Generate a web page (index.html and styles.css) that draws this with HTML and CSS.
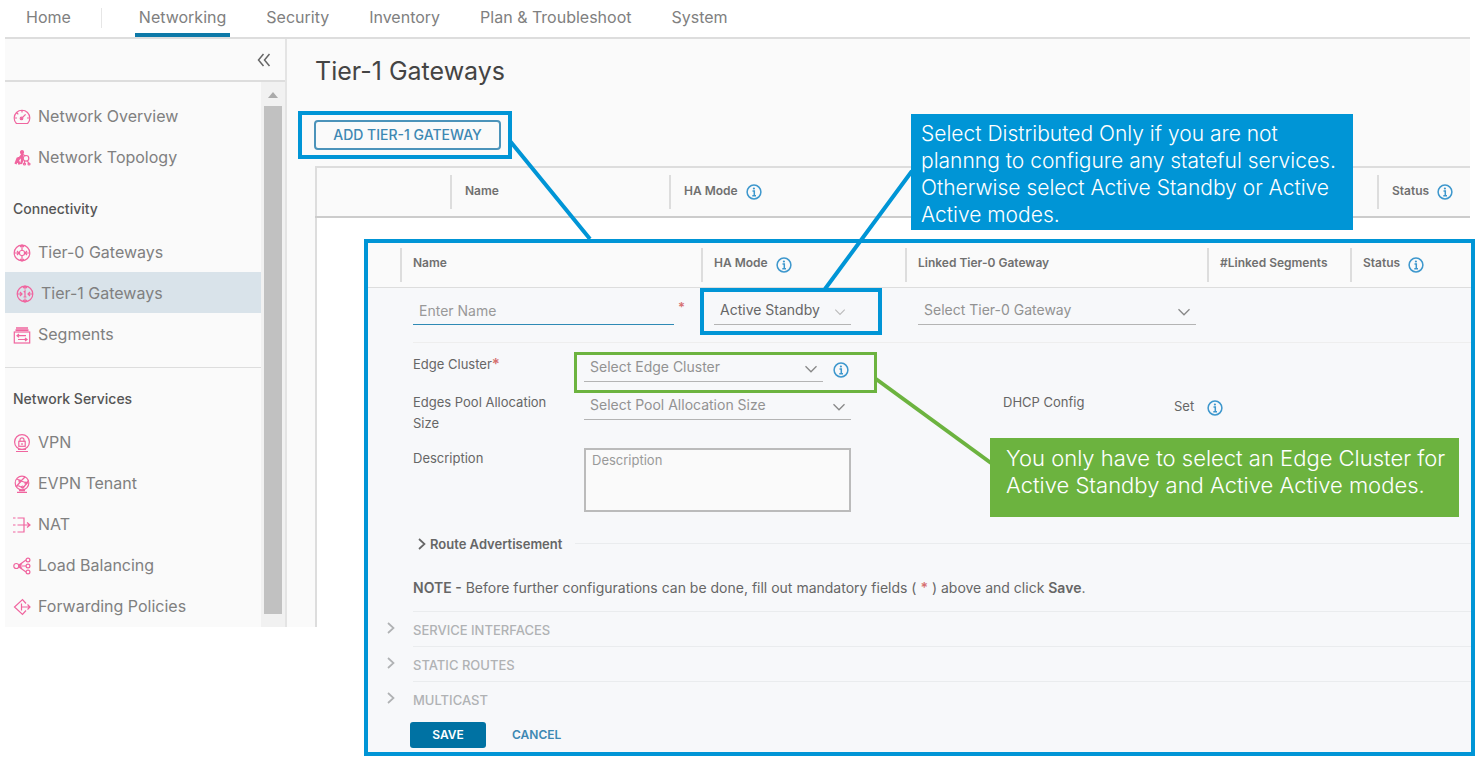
FILE: index.html
```html
<!DOCTYPE html>
<html lang="en">
<head>
<meta charset="utf-8">
<title>Tier-1 Gateways</title>
<link rel="stylesheet" href="styles.css">
</head>
<body>
<svg class="sprite" aria-hidden="true">
  <symbol id="info" viewBox="0 0 16 16"><circle cx="8" cy="8" r="6.9" fill="none" stroke="currentColor" stroke-width="1.5"/><path d="M6.5 7h1.8v4.6M6.3 11.7h3.7" fill="none" stroke="currentColor" stroke-width="1.5"/><circle cx="7.9" cy="4.5" r="1.1" fill="currentColor"/></symbol>
  <symbol id="down" viewBox="0 0 14 14"><path d="M1.5 4.2 7 9.8l5.5-5.6" fill="none" stroke="currentColor" stroke-width="1.3"/></symbol>
  <symbol id="right" viewBox="0 0 10 12"><path d="M2 1l5.5 5L2 11" fill="none" stroke="currentColor" stroke-width="1.7"/></symbol>
</svg>

<nav class="topnav">
  <a href="#" class="home">Home</a>
  <a href="#" class="current">Networking</a>
  <a href="#">Security</a>
  <a href="#">Inventory</a>
  <a href="#">Plan &amp; Troubleshoot</a>
  <a href="#">System</a>
</nav>

<div class="app">
  <aside class="sidebar">
    <div class="side-head">
      <button class="collapse" aria-label="Collapse menu"><svg width="14" height="14" viewBox="0 0 14 14"><path d="M6.5 1 1.5 7l5 6M12.5 1l-5 6 5 6" fill="none" stroke="currentColor" stroke-width="1.5"/></svg></button>
    </div>
    <div class="side-body">
      <nav class="menu">
        <a href="#"><svg viewBox="0 0 18 18"><path d="M3.4 15.5A7.8 7.8 0 1 1 14.6 15.5zM9 2.5v2M2 10h2M14 10h2M4 5l1.3 1.3" /><path d="M8 11l4.6-4.7"/><circle cx="8.5" cy="10.4" r="1.3"/></svg>Network Overview</a>
        <a href="#"><svg viewBox="0 0 18 18"><path stroke-width="2.3" d="M9 3.500v4L4.500 9.500 2.500 15M9 6l-4 5 1.500 4.500M9 7v5l-1 3"/><circle cx="9" cy="3.200" r="1.500" fill="#f0659f"/><path d="M9 5l3.500 2"/><circle cx="13" cy="9.300" r="2.800"/><path d="M11.500 12v3M14.500 12l1.500 3"/><circle cx="11.500" cy="15" r="1"/><circle cx="16" cy="15" r="1"/></svg>Network Topology</a>
        <h2>Connectivity</h2>
        <a href="#"><svg viewBox="0 0 18 18"><circle cx="9" cy="9" r="7.8"/><path d="M9 1v5M9 12v5M1 9h5M12 9h5M4 7l2 2-2 2M14 7l-2 2 2 2M7 3l2-2 2 2M7 15l2 2 2-2"/><rect x="6.5" y="6.5" width="5" height="5" rx="2"/></svg>Tier-0 Gateways</a>
        <a href="#" class="selected"><svg viewBox="0 0 18 18"><circle cx="9" cy="9" r="7.8"/><path d="M9 1v3.5M9 13.5V17M1 9h5M12 9h5M4 7l2 2-2 2M14 7l-2 2 2 2M7 3l2-2 2 2M7 15l2 2 2-2M7.7 7 9 6v6M7.5 12h3"/></svg>Tier-1 Gateways</a>
        <a href="#"><svg viewBox="0 0 18 18"><path d="M3 2h12M2.5 4.2h13" stroke-width="1.7"/><rect x="1.3" y="6" width="15.4" height="11"/><path d="M4 9.7h9M6 8l-2 1.7L6 11.400M5 13.500h9M12 12l2 1.500-2 1.500"/></svg>Segments</a>
        <hr>
        <h2>Network Services</h2>
        <a href="#"><svg viewBox="0 0 18 18"><circle cx="9" cy="8" r="7.4"/><rect x="5.800" y="7.300" width="6.400" height="5"/><path d="M7 7V5.800a2 2 0 0 1 4 0V7M9 9v2M5 15.500h8M3 17.500h12"/></svg>VPN</a>
        <a href="#"><svg viewBox="0 0 18 18"><circle cx="9" cy="8" r="6.800"/><path d="M4 4l4 2 4-4M8 6l-5 6M8 6l6 2-4 5M14 8l1.500-3M10 13l-6-3M6 15.500h6M4 17.500h10" stroke-width="1.300"/><circle cx="7" cy="6" r="1"/><circle cx="13" cy="8" r="1"/><circle cx="9.500" cy="12" r="1"/></svg>EVPN Tenant</a>
        <a href="#"><svg viewBox="0 0 18 18"><path d="M4.500 2h6.500v14H4.500M0 2h2.500M0 9h2.500M0 16h2.500M4.500 9H17M14 6.500 17 9l-3 2.500"/></svg>NAT</a>
        <a href="#"><svg viewBox="0 0 18 18"><circle cx="3.300" cy="9" r="2.500"/><path d="M5.800 9H13M6 8l7-5M6 10l7 5M9 6.500 6 9l3 2.500"/><circle cx="15" cy="3" r="1.900"/><circle cx="15" cy="9" r="1.900"/><circle cx="15" cy="15" r="1.900"/></svg>Load Balancing</a>
        <a href="#"><svg viewBox="0 0 18 18"><path d="M13 5.500 9.500 1.500 1.500 9l8 7.500 3.500-4M8.500 5.500v7M8.500 9H17M14.500 6.500 17 9l-2.500 2.500"/></svg>Forwarding Policies</a>
      </nav>
      <div class="scrollbar"><span class="scroll-up"></span><span class="thumb"></span></div>
    </div>
  </aside>

  <main class="main">
    <h1>Tier-1 Gateways</h1>
    <div class="add-frame"><button class="add">ADD TIER-1 GATEWAY</button></div>
    <table class="listing">
      <colgroup><col class="l-tools"><col class="l-name"><col><col class="l-status"></colgroup>
      <thead><tr>
        <th></th>
        <th><span>Name</span></th>
        <th><span>HA Mode <svg class="info"><use href="#info"/></svg></span></th>
        <th><span>Status <svg class="info"><use href="#info"/></svg></span></th>
      </tr></thead>
    </table>
  </main>
</div>

<section class="editor">
  <table class="edit-table">
    <colgroup><col class="e-tools"><col class="e-name"><col class="e-mode"><col class="e-linked"><col class="e-segments"><col></colgroup>
    <thead><tr>
      <th></th>
      <th><span>Name</span></th>
      <th><span>HA Mode <svg class="info"><use href="#info"/></svg></span></th>
      <th><span>Linked Tier-0 Gateway</span></th>
      <th><span>#Linked Segments</span></th>
      <th><span>Status <svg class="info"><use href="#info"/></svg></span></th>
    </tr></thead>
    <tbody><tr>
      <td></td>
      <td><div class="cell"><input class="field name" type="text" placeholder="Enter Name" aria-label="Name"><b class="req">*</b></div></td>
      <td><div class="cell"><div class="picker mode"><select class="field" aria-label="HA Mode"><option>Active Standby</option><option>Active Active</option><option>Distributed Only</option></select><svg><use href="#down"/></svg></div></div></td>
      <td><div class="cell"><div class="picker linked"><select class="field" aria-label="Linked Tier-0 Gateway"><option>Select Tier-0 Gateway</option></select><svg><use href="#down"/></svg></div></div></td>
      <td></td>
      <td></td>
    </tr></tbody>
  </table>

  <form class="details">
    <div class="form-grid">
      <label for="cluster">Edge Cluster<b class="req">*</b></label>
      <div class="control"><div class="picker cluster"><select class="field" id="cluster"><option>Select Edge Cluster</option></select><svg><use href="#down"/></svg></div><svg class="info"><use href="#info"/></svg></div>
      <span></span><span></span>
      <label for="pool">Edges Pool Allocation Size</label>
      <div class="control"><div class="picker pool"><select class="field" id="pool"><option>Select Pool Allocation Size</option></select><svg><use href="#down"/></svg></div></div>
      <span class="label">DHCP Config</span>
      <div class="control set"><a href="#">Set</a><svg class="info"><use href="#info"/></svg></div>
      <label for="desc">Description</label>
      <textarea id="desc" placeholder="Description"></textarea>
    </div>
    <button type="button" class="route"><svg width="10" height="12"><use href="#right"/></svg>Route Advertisement</button>
    <p class="note"><b>NOTE -</b> Before further configurations can be done, fill out mandatory fields ( <b class="req">*</b> ) above and click <b>Save</b>.</p>
    <button type="button" class="section" disabled><svg width="10" height="12"><use href="#right"/></svg><span>SERVICE INTERFACES</span></button>
    <button type="button" class="section" disabled><svg width="10" height="12"><use href="#right"/></svg><span>STATIC ROUTES</span></button>
    <button type="button" class="section" disabled><svg width="10" height="12"><use href="#right"/></svg><span>MULTICAST</span></button>
    <div class="actions"><button type="button" class="save">SAVE</button><button type="button" class="cancel">CANCEL</button></div>
  </form>
</section>

<svg class="connectors" aria-hidden="true">
  <path class="blue" d="M510 141 590 239M912 171 825 289"/>
  <path class="green" d="M876 379 991 463"/>
</svg>
<div class="frame mode-frame"></div>
<div class="frame cluster-frame"></div>
<p class="callout tip-mode">Select Distributed Only if you are not<br>plannng to configure any stateful services.<br>Otherwise select Active Standby or Active<br>Active modes.</p>
<p class="callout tip-cluster">You only have to select an Edge Cluster for<br>Active Standby and Active Active modes.</p>
</body>
</html>
```

FILE: styles.css
```css
* { box-sizing: border-box; }
body { margin: 0; min-height: 758px; position: relative; background: #fff; color: #666; font: 13px/20px Inter, "Open Sans", sans-serif; }
a { color: inherit; text-decoration: none; }
button, input, select, textarea { font: inherit; color: inherit; margin: 0; border-radius: 0; }
button { background: none; border: 0; padding: 0; }
h1, h2, p { margin: 0; font-weight: 400; }
.sprite { display: none; }
.info { width: 16px; height: 16px; color: #3d97cd; flex: none; }

.topnav { display: flex; gap: 40px; height: 39px; margin: 0 6px 0 5px; padding-left: 21px; border-bottom: 2px solid #ddd; font-size: 16px; color: #808080; }
.topnav a { height: 37px; line-height: 35px; }
.topnav .home { display: flex; gap: 30px; margin-right: -3px; }
.topnav .home::after { content: ""; width: 1px; height: 20px; margin-top: 8px; background: #e6e6e6; }
.topnav .current { padding: 0 4px; border-bottom: 4px solid #0d79a8; margin: 0 -4px; }

.app { display: grid; grid-template-columns: 282px 1fr; height: 588px; margin: 0 6px 0 5px; background: #fafafa; }
.sidebar { display: flex; flex-direction: column; border-right: 2px solid #e4e4e4; min-height: 0; }
.side-head { height: 43px; border-bottom: 2px solid #ddd; display: flex; justify-content: flex-end; align-items: center; padding-right: 14px; }
.collapse { display: flex; color: #666; }
.side-body { flex: 1; min-height: 0; display: flex; }
.menu { flex: 1; padding-top: 13px; font-size: 16px; color: #808080; }
.menu a { display: flex; align-items: center; gap: 7px; height: 41px; padding-left: 8px; }
.menu svg { width: 18px; height: 18px; margin-top: 3px; fill: none; stroke: #f0659f; stroke-width: 1.2; }
.menu .selected { padding-left: 11px; background: #d9e3ea; }
.menu h2 { height: 44px; margin-top: 10px; padding-left: 8px; font-size: 14px; line-height: 44px; font-weight: 500; color: #555; }
.menu hr { margin: 13px 0 0; border: 0; border-top: 1px solid #ddd; }
.menu hr + h2 { margin-top: 9px; }
.scrollbar { width: 24px; background: #f1f1f1; display: flex; flex-direction: column; align-items: center; padding-bottom: 13px; }
.scroll-up { margin: 10px 0 8px; border: 5px solid transparent; border-top: 0; border-bottom: 6px solid #aaa; }
.thumb { width: 18px; flex: 1; background: #c1c1c1; }

.main { display: flex; flex-direction: column; padding-left: 28px; min-width: 0; }
h1 { font-size: 25px; line-height: 34px; padding-top: 15px; color: #444; }
.add-frame { width: 214px; height: 48px; margin: 23px 0 0 -17px; padding: 5px 7px 5px 12px; border: 4px solid #0095d6; }
.add { width: 100%; height: 100%; border: 2px solid #4b93ba; border-radius: 4px; color: #3d88b3; font-size: 14px; font-weight: 500; }
table { table-layout: fixed; border-collapse: collapse; width: 100%; }
th { padding: 0; text-align: left; font-size: 12px; font-weight: 600; color: #707070; }
th span { display: flex; align-items: center; gap: 8px; border-left: 2px solid #ddd; height: 34px; padding: 0 0 3px 13px; }
th .info { margin-top: 3px; }
.listing { margin-top: 7px; height: 52px; border: 2px solid #ddd; border-right: 0; border-bottom-color: #ccc; }
.l-tools { width: 134px; }
.l-name { width: 219px; }
.l-status { width: 93px; }
.main::after { content: ""; flex: 1; background: #fff; border-left: 2px solid #ddd; }

.editor { position: absolute; left: 364px; right: 1px; top: 239px; border: 4px solid #0095d6; background: #f7f8fa; }
.edit-table thead { background: #fafafa; }
.edit-table th { height: 44px; border-bottom: 1px solid #ddd; }
.edit-table th span { padding-left: 11px; }
.e-tools { width: 32px; }
.e-name { width: 301px; }
.e-mode { width: 204px; }
.e-linked { width: 302px; }
.e-segments { width: 143px; }
.edit-table td { padding: 0; }
.cell { display: flex; padding: 9px 0 0 13px; height: 54px; }
.field { appearance: none; width: 100%; height: 28px; padding: 0 6px; border: 0; border-bottom: 1px solid #b4b4b4; background: none; color: #929292; font-size: 14px; outline: 0; }
.field::placeholder, textarea::placeholder { color: #999; opacity: 1; }
.name { max-width: 261px; border-color: #2f8ab5; }
.req { color: #d67070; font-weight: 600; }
.cell .req { margin-left: 4px; }
.picker { position: relative; }
.picker svg { position: absolute; right: 5px; top: 8px; width: 14px; height: 14px; color: #888; pointer-events: none; }
.mode { width: 137px; }
.mode .field { color: #666; }
.mode svg { width: 12px; color: #bbb; }
.linked { width: 278px; }
.cluster { width: 239px; }
.pool { width: 267px; }

.details { padding-left: 45px; }
.form-grid { display: grid; grid-template-columns: 171px minmax(267px, 419px) 171px 1fr; grid-template-rows: 38px 56px 64px; border-top: 1px solid #eee; padding-top: 11px; }
.form-grid label, .form-grid .label { line-height: 21px; padding-right: 20px; }
.form-grid label .req { font-size: 15px; line-height: 16px; }
.control { display: flex; gap: 10px; align-items: flex-start; }
.control .info { margin-top: 8px; }
.set { gap: 13px; }
.set a { line-height: 28px; }
textarea { display: block; width: 267px; height: 64px; padding: 0 6px; resize: none; border: 2px solid #bbb; background: #fafafa; outline: 0; }
.route { display: flex; align-items: center; gap: 3px; width: 100%; height: 20px; margin-top: 22px; padding-left: 4px; font-weight: 600; }
.route::after { content: ""; flex: 1; height: 1px; margin-left: 10px; background: #eaecee; }
.note { padding: 24px 0 13px; font-size: 14px; }
.note b { font-weight: 600; }
.section { display: flex; align-items: center; width: calc(100% + 27px); height: 35px; margin-left: -27px; gap: 17px; font-size: 13px; font-weight: 500; color: #b0b2b4; }
.section span { flex: 1; height: 35px; line-height: 36px; text-align: left; border-top: 1px solid #eaecee; }
.actions { display: flex; gap: 26px; margin: 6px 0 4px -3px; }
.actions button { height: 26px; font-weight: 600; font-size: 12px; }
.actions .save { width: 76px; border-radius: 3px; background: #0072a3; color: #fff; }
.actions .cancel { color: #3d88b3; }

/* annotation layer over the page */
.connectors { position: absolute; left: 0; top: 0; width: 100%; height: 100%; pointer-events: none; fill: none; }
.blue { stroke: #0095d6; stroke-width: 4; }
.green { stroke: #6cb33f; stroke-width: 4; }
.frame { position: absolute; pointer-events: none; }
.mode-frame { left: 700px; top: 288px; width: 182px; height: 47px; border: 4px solid #0095d6; }
.cluster-frame { left: 574px; top: 352px; width: 303px; height: 41px; border: 3px solid #6cb33f; }
.callout { position: absolute; color: #fff; font-size: 21px; line-height: 27px; font-weight: 300; white-space: nowrap; }
.tip-mode { left: 911px; top: 114px; width: 442px; padding: 6px 10px 2px; background: #0095d6; }
.tip-cluster { left: 990px; top: 438px; width: 469px; padding: 7px 16px 18px; background: #6cb33f; font-size: 22px; }
```
